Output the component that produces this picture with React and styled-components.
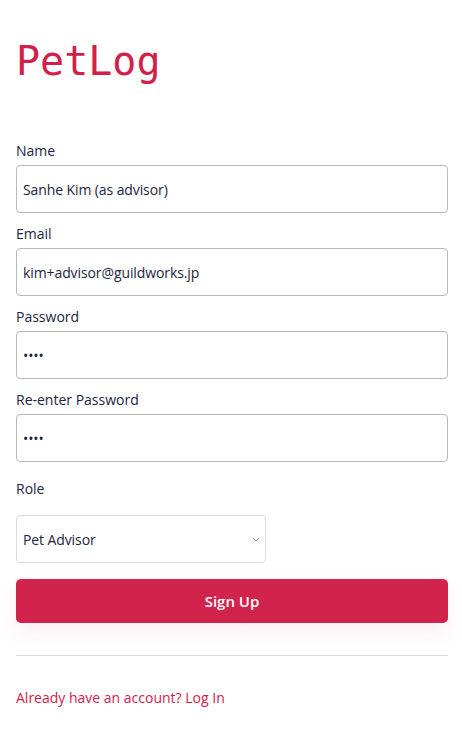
import React from 'react';
import styled, { createGlobalStyle } from 'styled-components';

const GlobalStyle = createGlobalStyle`
  body {
    margin: 0;
    background: #fff;
    font-family: "Open Sans", "Noto Sans", sans-serif;
    color: #1c2541;
  }
`;

const Page = styled.div`
  padding: 0 14px 0 16px;
`;

const Logo = styled.h1`
  margin: 34px 0 53px;
  font-family: "DejaVu Sans Mono", "Liberation Mono", monospace;
  font-weight: normal;
  font-size: 40px;
  line-height: 54px;
  color: #d1214b;
`;

const Form = styled.form`
  display: flex;
  flex-direction: column;
`;

const Field = styled.div`
  display: flex;
  flex-direction: column;
  gap: ${props => props.gap || 5}px;
  margin-bottom: ${props => props.spacing || 11}px;
`;

const Label = styled.label`
  font-size: 14px;
  line-height: 19px;
  color: #1c2541;
`;

const Input = styled.input`
  box-sizing: border-box;
  width: 100%;
  height: 48px;
  padding: 0 6px;
  border: 1px solid #b9b9b9;
  border-radius: 4px;
  font-family: inherit;
  font-size: 14px;
  letter-spacing: -0.1px;
  color: #1c2541;
  outline: none;
`;

const SelectWrap = styled.div`
  position: relative;
  width: 250px;
`;

const Select = styled.select`
  box-sizing: border-box;
  width: 100%;
  height: 48px;
  padding: 0 6px;
  border: 1px solid #dcdcdc;
  border-radius: 4px;
  background: #fff;
  font-family: inherit;
  font-size: 14px;
  letter-spacing: -0.1px;
  color: #1c2541;
  appearance: none;
  outline: none;
`;

const Chevron = styled.svg`
  position: absolute;
  right: 6px;
  top: 22px;
  pointer-events: none;
`;

const Button = styled.button`
  height: 44px;
  margin-top: 3px;
  border: none;
  border-radius: 5px;
  background: #d1234b;
  color: #fff;
  font-family: inherit;
  font-size: 15px;
  font-weight: 600;
  box-shadow: 0 10px 20px rgba(209, 35, 75, 0.08);
`;

const Divider = styled.hr`
  margin: 32px 0 0;
  border: none;
  border-top: 1px solid #dcdcdc;
`;

const Footer = styled.p`
  margin: 32px 0 0;
  font-size: 14px;
  line-height: 20px;
  color: #d1214b;
`;

const TextField = ({ label, type = 'text', value, spacing }) => (
  <Field spacing={spacing}>
    <Label>{label}</Label>
    <Input type={type} defaultValue={value} />
  </Field>
);

export default function App() {
  return (
    <Page>
      <GlobalStyle />
      <Logo>PetLog</Logo>
      <Form onSubmit={e => e.preventDefault()}>
        <TextField label="Name" value="Sanhe Kim (as advisor)" />
        <TextField label="Email" type="email" value="kim+advisor@guildworks.jp" />
        <TextField label="Password" type="password" value="pass" />
        <TextField label="Re-enter Password" type="password" value="pass" spacing={17} />
        <Field gap={17} spacing={13}>
          <Label>Role</Label>
          <SelectWrap>
            <Select defaultValue="advisor">
              <option value="owner">Pet Owner</option>
              <option value="advisor">Pet Advisor</option>
            </Select>
            <Chevron width="8" height="5" viewBox="0 0 8 5">
              <path d="M1 1l3 3 3-3" fill="none" stroke="#999" strokeWidth="1" />
            </Chevron>
          </SelectWrap>
        </Field>
        <Button type="submit">Sign Up</Button>
      </Form>
      <Divider />
      <Footer>Already have an account? Log In</Footer>
    </Page>
  );
}
